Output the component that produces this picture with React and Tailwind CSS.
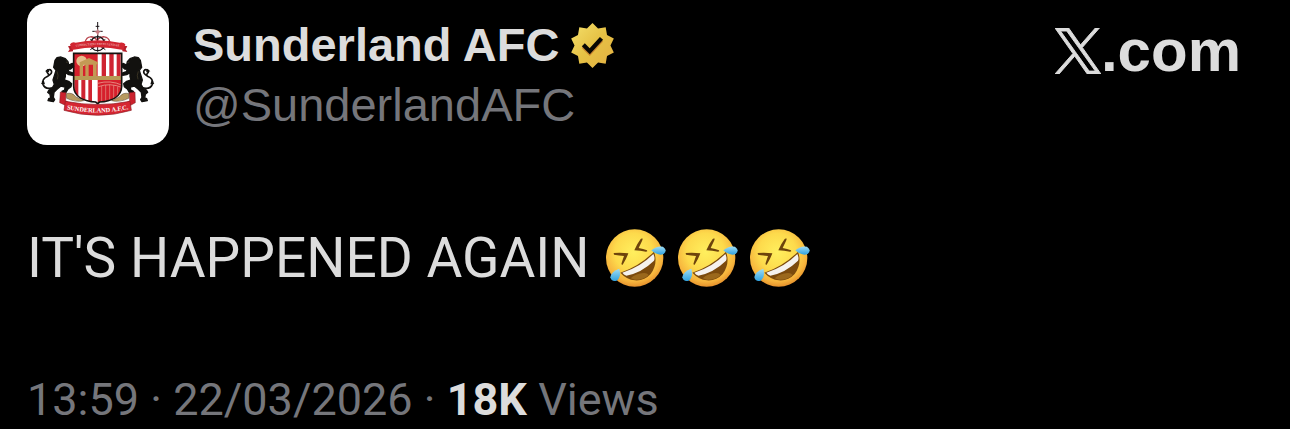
import { useId } from 'react';

/**
 * Post card: author header, body text and footer stats
 */
const POST = {
    name: 'Sunderland AFC',
    handle: '@SunderlandAFC',
    body: "IT'S HAPPENED AGAIN",
    time: '13:59',
    date: '22/03/2026',
    views: '18K',
};

const LION = 'M106 181 L112 173 L124 171 L137 176 L145 185 L147 195 L158 190 L162 199 L153 207 L145 208 L148 215 L159 219 L159 226 L147 224 L137 218 L137 230 L134 240 L147 244 L156 251 L154 260 L145 267 L138 279 L128 280 L127 274 L135 270 L136 261 L124 258 L112 268 L103 277 L101 292 L105 299 L101 305 L85 302 L87 296 L93 294 L91 283 L84 277 L88 270 L97 266 L104 253 L100 240 L105 224 L109 211 L102 202 Z';
const LION_TAIL = 'M101 263 C90 266 75 266 70 253 C66 240 75 233 84 229 C91 225 98 218 95 212 C91 207 81 209 82 216 C86 222 90 225 84 229';

const Lion = () => (
    <g>
        <path d={LION} fill="#12110f" stroke="#12110f" strokeWidth="4" strokeLinejoin="round" />
        <path d={LION_TAIL} fill="none" stroke="#12110f" strokeWidth="5" strokeLinecap="round" />
        <path d="M64 252 l8 -12 l4 13 z M76 214 l9 -8 l4 11 z" fill="#12110f" />
        <path d="M112 214 q6 12 1 24 M139 186 l5 2" stroke="#5d5236" strokeWidth="1.5" fill="none" />
    </g>
);

const Crest = () => {
    const id = useId();
    return (
        <svg viewBox="22 9 426 426" className="size-full" role="img" aria-label="Sunderland AFC crest">
            <defs>
                <clipPath id={`${id}-shield`}>
                    <path d="M162 160 H306 V258 C306 292 272 304 240 306 L234 311 L228 306 C196 304 162 292 162 258 Z" />
                </clipPath>
                <path id={`${id}-top`} d="M150 143 Q234 127 318 143" />
                <path id={`${id}-name`} d="M130 325 Q234 350 338 325" />
            </defs>

            {/* Ship's wheel */}
            <g fill="none" stroke="#1a1518" strokeWidth="4">
                <path d="M234 66 V118 M218 94 H249 M228 79 H239" strokeWidth="3" />
                <path d="M196 127 C202 103 223 109 232 120 C244 108 265 104 271 127" stroke="#b8424b" />
                <circle cx="234" cy="131" r="21" />
                <path d="M234 104 V155 M212 118 L257 149 M257 118 L212 149" strokeWidth="3" />
            </g>
            <path d="M234 86 l4 8 h8 l-8 4 l-4 9 l-4 -9 l-8 -4 h8 z" fill="#c77980" />

            {/* Motto ribbon */}
            <path d="M145 139 L160 136 V154 L145 156 L150 148 Z M323 139 L308 136 V154 L323 156 L318 148 Z" fill="#b51f2a" />
            <path d="M151 133 Q158 124 168 128 Q234 113 300 128 Q311 125 317 133 L311 150 Q234 134 157 150 Z" fill="#d12631" />
            <text fontSize="9" fill="#f6dede" className="font-['Liberation_Serif',serif]">
                <textPath href={`#${id}-top`} startOffset="50%" textAnchor="middle">CONSECTATIO EXCELLENTIAE</textPath>
            </text>

            {/* Shield quarters */}
            <g clipPath={`url(#${id}-shield)`}>
                <rect x="160" y="158" width="148" height="155" fill="#fff" />
                <rect x="160" y="158" width="74" height="78" fill="#d6202c" />
                <circle cx="186" cy="183" r="16" fill="#e6bd8b" />
                <path d="M180 187 L208 174 L235 187 V193 H231 V228 H220 V194 H207 V228 H197 V194 H190 V228 H180 Z" fill="#c49a55" />
                <path d="M246 158 h13 v78 h-13 z M269 158 h13 v78 h-13 z M291 158 h12 v78 h-12 z" fill="#cf2431" />
                <path d="M164 237 h12 v80 h-12 z M185 237 h12 v80 h-12 z M206 237 h11 v80 h-11 z" fill="#cf2431" />
                <rect x="234" y="237" width="74" height="76" fill="#d6202c" />
                <path d="M234 250 Q272 239 308 256 M236 260 Q272 247 308 263" fill="none" stroke="#edb9a7" strokeWidth="2" />
                <path d="M246 258 V304 M258 255 V304 M270 254 V300 M282 256 V296 M294 260 V288" stroke="#e3988b" strokeWidth="2" />
                <rect x="160" y="228" width="148" height="12" fill="#b99a55" />
            </g>
            <path d="M162 160 H306 V258 C306 292 272 304 240 306 L234 311 L228 306 C196 304 162 292 162 258 Z" fill="none" stroke="#17120f" strokeWidth="5" />

            <Lion />
            <g transform="translate(468 0) scale(-1 1)">
                <Lion />
            </g>

            {/* Name ribbon */}
            <path d="M122 276 L139 278 L138 302 L151 310 L137 316 L120 308 Z M346 276 L329 278 L330 302 L317 310 L333 316 L347 308 Z" fill="#cb222e" stroke="#761b20" strokeWidth="1.5" />
            <path d="M140 281 Q158 276 168 290 L192 302 Q168 308 141 295 Z M328 281 Q310 276 300 290 L276 302 Q300 308 327 295 Z" fill="#b79a60" stroke="#493824" strokeWidth="1.5" />
            <path d="M137 304 Q234 323 331 304 L335 331 Q234 361 133 331 Z" fill="#d62632" stroke="#8d1c24" strokeWidth="2" />
            <text fontSize="19" fontWeight="700" fill="#fff" className="font-['Liberation_Serif',serif]">
                <textPath href={`#${id}-name`} startOffset="50%" textAnchor="middle">SUNDERLAND A.F.C.</textPath>
            </text>
        </svg>
    );
};

const GoldBadge = () => {
    const id = useId();
    return (
        <svg viewBox="0 0 22 22" className="size-[47px] shrink-0" role="img" aria-label="Verified">
            <defs>
                <linearGradient id={id} x1="0" y1="0" x2="1" y2="1">
                    <stop offset="0" stopColor="#f4e06c" />
                    <stop offset="0.5" stopColor="#e6c144" />
                    <stop offset="1" stopColor="#e3b044" />
                </linearGradient>
            </defs>
            <path
                d="M13.596 3.011L11 .5 8.404 3.011l-3.576-.506-.624 3.558-3.19 1.692L2.6 11l-1.586 3.245 3.19 1.692.624 3.558 3.576-.506L11 21.5l2.596-2.511 3.576.506.624-3.558 3.19-1.692L19.4 11l1.586-3.245-3.19-1.692-.624-3.558-3.576.506z"
                fill={`url(#${id})`}
            />
            <path d="M6 12.2l3.74 3.74 6.2-6.77-1.47-1.36-4.8 5.23-2.26-2.26z" fill="#c9852f" />
            <path d="M6 11.39l3.74 3.74 6.2-6.77L14.47 7l-4.8 5.23-2.26-2.26z" fill="#080703" />
        </svg>
    );
};

const XLogo = () => (
    <svg viewBox="0 0 24 24" className="size-[46px]" fill="currentColor" stroke="currentColor" strokeWidth="0.5" role="img" aria-label="X">
        <path d="M14.258 10.152L23.176 0h-2.113l-7.747 8.813L7.133 0H0l9.352 13.328L0 23.973h2.113l8.176-9.309 6.531 9.309h7.133zm-2.895 3.293l-.949-1.328L2.875 1.56h3.246l6.086 8.523.945 1.328 7.91 11.078h-3.246z" />
    </svg>
);

const Rofl = () => {
    const id = useId();
    return (
        <svg viewBox="30 26 180 174" className="h-[58px] w-[60px]" role="img" aria-label="Rolling on the floor laughing">
            <defs>
                <radialGradient id={`${id}-face`} cx="0.48" cy="0.4" r="0.6">
                    <stop offset="0" stopColor="#ffef5e" />
                    <stop offset="0.55" stopColor="#fdda4c" />
                    <stop offset="0.85" stopColor="#f7b53d" />
                    <stop offset="1" stopColor="#e6922d" />
                </radialGradient>
                <linearGradient id={`${id}-tear`} x1="0" y1="0" x2="0" y2="1">
                    <stop offset="0" stopColor="#a1def5" />
                    <stop offset="1" stopColor="#2fa1df" />
                </linearGradient>
            </defs>
            <circle cx="116" cy="113" r="86" fill={`url(#${id}-face)`} />
            <path d="M53 98 Q76 96 97 99 Q92 114 80 133 Q75 134 77 128 Q81 115 84 107 Q70 105 54 103 Z" fill="#6d430c" />
            <path d="M139 54 Q141 57 138 62 L128 83 Q142 86 153 90 Q156 94 150 94 Q133 91 115 90 Q122 72 134 56 Z" fill="#6d430c" />
            <path d="M73 157 Q129 139 174 94 Q187 129 164 161 Q145 182 117 180 Q92 178 73 157 Z" fill="#7b4a0d" />
            <path d="M79 157 Q132 141 172 101 Q178 113 174 121 Q137 157 91 166 Q83 163 79 157 Z" fill="#f5f2ee" />
            <path d="M104 174 Q120 159 144 158 Q154 158 158 164 Q142 180 117 178 Z" fill="#9b681c" />
            <path d="M166 90 Q183 75 201 79 Q216 90 203 101 Q187 108 166 90 Z" fill={`url(#${id}-tear)`} />
            <path d="M70 145 Q77 170 62 181 Q47 186 43 171 Q46 153 70 145 Z" fill={`url(#${id}-tear)`} />
        </svg>
    );
};

export default function App() {
    return (
        <article className="min-h-screen bg-black px-[27px] pt-[3px] font-[Roboto,sans-serif] text-[#dcdcdc]">
            <header className="flex items-start justify-between pr-[22px] font-['Liberation_Sans',sans-serif]">
                <div className="flex items-start gap-6">
                    <div className="size-[142px] shrink-0 overflow-hidden rounded-[20px] bg-white">
                        <Crest />
                    </div>
                    <div className="pt-3">
                        <h1 className="flex items-center gap-2.5 text-[47px] leading-[60px] font-bold whitespace-nowrap">
                            {POST.name}
                            <GoldBadge />
                        </h1>
                        <p className="text-[47px] leading-[60px] text-[#75767b]">{POST.handle}</p>
                    </div>
                </div>
                <div className="flex items-center pt-3 text-[60px] leading-[72px] font-bold">
                    <XLogo />
                    <span>.com</span>
                </div>
            </header>

            <div className="mt-[77px] flex items-center gap-4">
                <p className="text-[55px] leading-[72px] whitespace-nowrap">{POST.body}</p>
                <div className="flex gap-3">
                    <Rofl />
                    <Rofl />
                    <Rofl />
                </div>
            </div>

            <footer className="mt-[77px] text-[45px] leading-[58px] whitespace-nowrap text-[#75767b]">
                <time dateTime="2026-03-22T13:59">{POST.time} · {POST.date}</time> ·{' '}
                <strong className="font-bold text-[#dcdcdc]">{POST.views}</strong> Views
            </footer>
        </article>
    );
}
